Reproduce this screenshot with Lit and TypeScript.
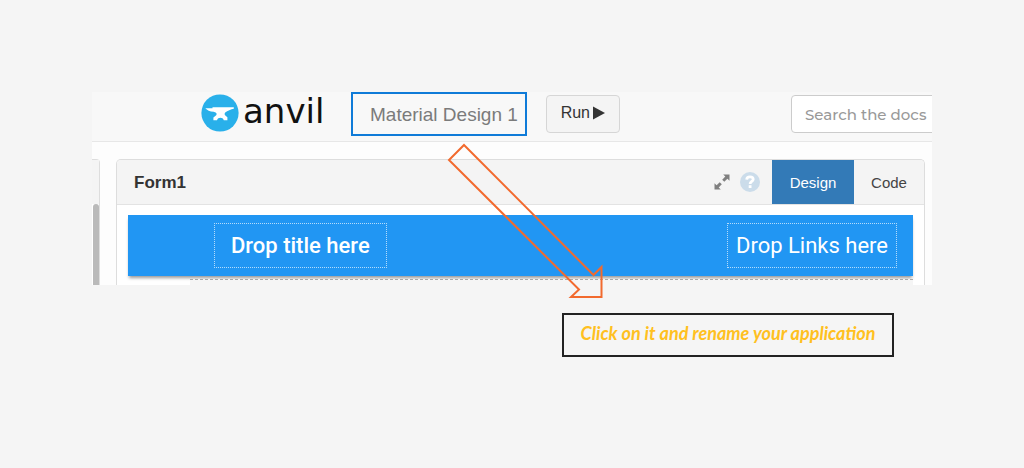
import { LitElement, html, css } from "lit";
import { customElement, state } from "lit/decorators.js";
import { classMap } from "lit/directives/class-map.js";

@customElement("anvil-topbar")
class AnvilTopbar extends LitElement {
  static styles = css`
    :host {
      display: block;
      font-family: "Liberation Sans", Arial, sans-serif;
    }
    .bar {
      display: flex;
      height: 49px;
      padding-left: 109px;
      background: #f8f8f8;
      border-bottom: 1px solid #e7e7e7;
      overflow: hidden;
    }
    .logo {
      display: flex;
      align-items: center;
      gap: 4px;
      width: 150px;
      height: 42px;
      color: #111;
      text-decoration: none;
      font: 34px/36px "DejaVu Sans", Verdana, sans-serif;
    }
    .logo svg {
      flex: none;
    }
    .logo span {
      padding-bottom: 4px;
    }
    .app-name {
      box-sizing: border-box;
      height: 44px;
      padding: 2px 7px 0 17px;
      border: 2px solid #0f7bd8;
      background: transparent;
      color: #7b7b7b;
      font: 19px/24px "Liberation Sans", Arial, sans-serif;
      text-align: left;
      white-space: nowrap;
    }
    .run {
      display: flex;
      align-items: center;
      justify-content: center;
      gap: 3px;
      box-sizing: border-box;
      width: 74px;
      height: 38px;
      margin: 3px 0 0 19px;
      padding: 0 0 2px;
      border: 1px solid #d6d6d6;
      border-radius: 4px;
      background: #f4f4f4;
      color: #333;
      font: 16px/20px "Liberation Sans", Arial, sans-serif;
    }
    .search {
      flex: none;
      width: 141px;
      margin: 3px 0 0 auto;
      overflow: hidden;
    }
    .search input {
      box-sizing: border-box;
      width: 220px;
      height: 38px;
      padding: 0 13px;
      border: 1px solid #ccc;
      border-radius: 4px;
      background: #fff;
      font: 500 15px/20px Montserrat, Inter, sans-serif;
    }
    .search input::placeholder {
      color: #999;
      opacity: 1;
    }
  `;

  render() {
    return html`
      <header class="bar">
        <a class="logo" href="#" aria-label="anvil">
          <svg width="38" height="38" viewBox="0 0 38 38" aria-hidden="true">
            <circle cx="19" cy="19" r="18.6" fill="#29b0ea" />
            <path
              fill="#fff"
              d="M11.5 13.2H32.8V14.8C30 15.4 26.4 16.6 24.2 18.6C23.2 19.8 23.6 21 24.6 21.8L26.4 23.2V26.2H22.8C22.2 24.6 21 23.8 19.4 23.8C17.8 23.8 16.6 24.6 16 26.2H12.4V23.4L14.6 21.8C16 20.8 16 19.2 14.6 18.4L12.6 17.8C9 17.4 6 16.2 4.3 14.2H11.5Z"
            />
          </svg>
          <span>anvil</span>
        </a>
        <button class="app-name" type="button">Material Design 1</button>
        <button class="run" type="button">
          Run
          <svg width="12" height="14" viewBox="0 0 12 14" aria-hidden="true">
            <path d="M0 0.5L12 7L0 13.5Z" fill="#333" />
          </svg>
        </button>
        <div class="search">
          <input type="search" placeholder="Search the docs" aria-label="Search the docs" />
        </div>
      </header>
    `;
  }
}

@customElement("form-editor")
class FormEditor extends LitElement {
  @state() private view = "Design";

  static styles = css`
    :host {
      display: block;
      font-family: "Liberation Sans", Arial, sans-serif;
    }
    .workspace {
      display: flex;
      gap: 16px;
      padding: 17px 7px 0 0;
      background: #fdfdfd;
    }
    .side {
      display: flex;
      flex-direction: column;
      box-sizing: border-box;
      width: 8px;
      border: 1px solid #ddd;
      border-width: 1px 1px 0 0;
      border-radius: 0 4px 0 0;
      background: #fff;
    }
    .side-head {
      height: 44px;
      background: #f4f4f4;
    }
    .scrollbar {
      flex: 1;
      margin-left: 1px;
      border-radius: 3px 3px 0 0;
      background: #bababa;
    }
    .panel {
      flex: 1;
      border: 1px solid #ddd;
      border-bottom: 0;
      border-radius: 5px 5px 0 0;
      background: #fff;
    }
    .head {
      display: flex;
      align-items: center;
      height: 44px;
      padding-left: 17px;
      border-bottom: 1px solid #e3e3e3;
      border-radius: 4px 4px 0 0;
      background: #f4f4f4;
    }
    h2 {
      flex: 1;
      margin: 0;
      padding-top: 2px;
      color: #333;
      font-size: 17px;
      line-height: 24px;
    }
    .icon {
      display: flex;
      padding: 0;
      border: 0;
      background: none;
    }
    .help {
      margin: 0 12px 0 10px;
    }
    .tab {
      align-self: stretch;
      width: 70px;
      padding: 2px 0 0;
      border: 0;
      background: transparent;
      color: #444;
      font: 15px/20px "Liberation Sans", Arial, sans-serif;
    }
    .tab.active {
      width: 82px;
      background: #337ab7;
      color: #fff;
    }
    .canvas {
      padding: 10px 11px 0;
    }
    .appbar {
      display: flex;
      align-items: center;
      justify-content: space-between;
      box-sizing: border-box;
      height: 61px;
      padding: 0 16px 0 86px;
      background: #2196f3;
      box-shadow: 0 3px 3px -1px rgba(0, 0, 0, 0.4);
      color: #fff;
      font: 22px/28px Roboto, sans-serif;
    }
    .slot {
      box-sizing: border-box;
      height: 45px;
      padding: 8px;
      border: 1px dotted #b5dcfb;
      white-space: nowrap;
    }
    .slot.title {
      padding: 8px 16px;
      font-weight: 500;
    }
    .content {
      height: 5px;
      margin: 3px 0 0 62px;
      border: 1px dashed #aaa;
      border-width: 1px 0 0;
      background: #f5f5f5;
    }
  `;

  render() {
    return html`
      <main class="workspace">
        <div class="side">
          <div class="side-head"></div>
          <div class="scrollbar"></div>
        </div>
        <section class="panel">
          <div class="head">
            <h2>Form1</h2>
            <button class="icon" type="button" aria-label="Expand">
              <svg width="16" height="16" viewBox="0 0 16 16" aria-hidden="true">
                <path
                  d="M9.2 0.5H15.5V6.8L13.4 4.7L10.3 7.8L8.2 5.7L11.3 2.6ZM6.8 15.5H0.5V9.2L2.6 11.3L5.7 8.2L7.8 10.3L4.7 13.4Z"
                  fill="#808080"
                />
              </svg>
            </button>
            <button class="icon help" type="button" aria-label="Help">
              <svg width="20" height="20" viewBox="0 0 20 20" aria-hidden="true">
                <circle cx="10" cy="10" r="10" fill="#cbdcea" />
                <path
                  d="M6.7 7.6C6.8 5.6 8.1 4.9 10 4.9C11.9 4.9 13.2 5.8 13.2 7.3C13.2 9.5 10.1 9.4 10.1 12"
                  fill="none"
                  stroke="#fff"
                  stroke-width="2.8"
                />
                <rect x="8.7" y="13.2" width="2.8" height="2.8" fill="#fff" />
              </svg>
            </button>
            ${["Design", "Code"].map(
              (name) => html`<button
                type="button"
                class=${classMap({ tab: true, active: this.view === name })}
                @click=${() => (this.view = name)}
              >${name}</button>`
            )}
          </div>
          <div class="canvas">
            <div class="appbar">
              <div class="slot title">Drop title here</div>
              <div class="slot">Drop Links here</div>
            </div>
            <div class="content"></div>
          </div>
        </section>
      </main>
    `;
  }
}

@customElement("app-root")
class AppRoot extends LitElement {
  static styles = css`
    :host {
      display: block;
      box-sizing: border-box;
      min-height: 100vh;
      padding: 92px 92px 0;
      background: #f5f5f5;
    }
    figure {
      position: relative;
      margin: 0;
    }
    .arrow {
      position: absolute;
      left: 355px;
      top: 51px;
      pointer-events: none;
    }
    .note {
      box-sizing: border-box;
      width: 332px;
      height: 44px;
      margin: 28px 0 0 470px;
      padding: 6px 0 0;
      border: 2px solid #222;
      color: #ffc020;
      text-align: center;
      white-space: nowrap;
      font: italic 700 18px/24px "Ink Free", Lato, cursive;
    }
  `;

  render() {
    return html`
      <figure>
        <anvil-topbar></anvil-topbar>
        <form-editor></form-editor>
        <svg class="arrow" width="158" height="158" viewBox="0 0 158 158" aria-hidden="true">
          <path
            d="M17 2L146.500 132L154.500 124V154H124L132 146.500L2 17Z"
            fill="none"
            stroke="#f26a2e"
            stroke-width="2"
          />
        </svg>
        <figcaption class="note">Click on it and rename your application</figcaption>
      </figure>
    `;
  }
}
